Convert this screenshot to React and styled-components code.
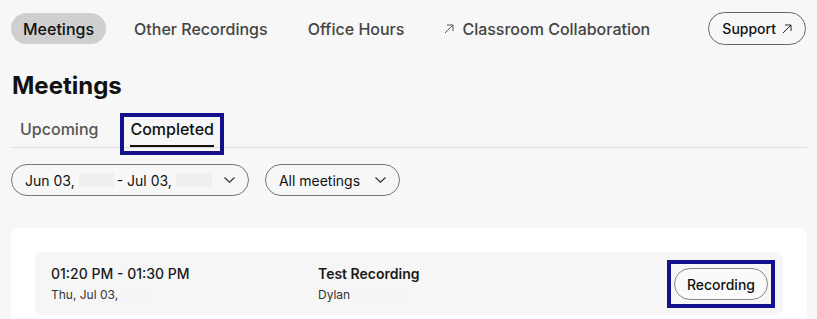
import { createGlobalStyle, styled } from 'styled-components'

const GlobalStyle = createGlobalStyle`
  html, body {
    margin: 0;
    padding: 0;
    background: #f7f7f7;
    font-family: Inter, "Noto Sans", "Liberation Sans", sans-serif;
    color: #111;
    overflow: hidden;
  }
`

const Arrow = ({ size = 9, color = '#555' }) => (
  <svg width={size} height={size} viewBox="0 0 10 10" fill="none">
    <path d="M1 9 L9 1 M3 1 H9 V7" stroke={color} strokeWidth="1" />
  </svg>
)

const Chevron = () => (
  <svg width="11" height="6" viewBox="0 0 11 6" fill="none">
    <path d="M0.5 0.5 L5.5 5.2 L10.5 0.5" stroke="#333" strokeWidth="1.2" />
  </svg>
)

const App = () => {
  return (
    <Page>
      <GlobalStyle />
      <Nav>
        <NavLinks>
          <NavLink $active>Meetings</NavLink>
          <NavLink>Other Recordings</NavLink>
          <NavLink>Office Hours</NavLink>
          <NavLink>
            <Arrow size={10} />
            Classroom Collaboration
          </NavLink>
        </NavLinks>
        <SupportButton>
          Support
          <Arrow size={10} color="#222" />
        </SupportButton>
      </Nav>

      <Title>Meetings</Title>

      <Tabs>
        <Tab>Upcoming</Tab>
        <Highlight $px={6} $py={4} $ml={-10} $mt={-8} $mb={-8}>
          <Tab $active>Completed</Tab>
        </Highlight>
      </Tabs>

      <Filters>
        <Dropdown>
          Jun 03,
          <Redacted $w={35} />
          - Jul 03,
          <Redacted $w={36} />
          <ChevronWrap $gap={9}>
            <Chevron />
          </ChevronWrap>
        </Dropdown>
        <Dropdown>
          All meetings
          <ChevronWrap $gap={15}>
            <Chevron />
          </ChevronWrap>
        </Dropdown>
      </Filters>

      <Card>
        <MeetingRow>
          <Cell>
            <Primary>01:20 PM - 01:30 PM</Primary>
            <Secondary>
              Thu, Jul 03,
              <Redacted $w={30} $soft />
            </Secondary>
          </Cell>
          <Cell>
            <Primary $strong>Test Recording</Primary>
            <Secondary>
              Dylan
              <Redacted $w={48} $soft />
            </Secondary>
          </Cell>
          <Highlight $px={3} $py={4} $ml={0} $mt={-8} $mb={-8} $mr={-8}>
            <RecordingButton>Recording</RecordingButton>
          </Highlight>
        </MeetingRow>
      </Card>
    </Page>
  )
}

const Page = styled.div`
  padding: 12px 10px 0 11px;
  height: 319px;
  box-sizing: border-box;
  overflow: hidden;
`

const Nav = styled.nav`
  display: flex;
  align-items: center;
  justify-content: space-between;
`

const NavLinks = styled.div`
  display: flex;
  align-items: center;
  gap: 16px;
`

const NavLink = styled.a`
  display: flex;
  align-items: center;
  gap: 8px;
  height: 31px;
  padding: 0 12px;
  border-radius: 999px;
  font-size: 16px;
  font-weight: 500;
  color: ${(p) => (p.$active ? '#111' : '#444')};
  background: ${(p) => (p.$active ? '#cfcfcf' : 'transparent')};
  cursor: pointer;
`

const SupportButton = styled.button`
  display: flex;
  align-items: center;
  gap: 6px;
  height: 33px;
  padding: 0 13px;
  margin-right: 1px;
  border: 1px solid #666;
  border-radius: 999px;
  background: transparent;
  font-family: inherit;
  font-size: 14px;
  font-weight: 500;
  color: #111;
`

const Title = styled.h1`
  margin: 26px 0 0 1px;
  font-size: 24px;
  line-height: 29px;
  font-weight: 700;
  color: #111;
`

const Tabs = styled.div`
  display: flex;
  align-items: flex-end;
  gap: 32px;
  margin-top: 21px;
  padding-left: 9px;
  border-bottom: 1px solid #dcdcdc;
`

const Highlight = styled.div`
  display: flex;
  align-items: center;
  padding: ${(p) => p.$py}px ${(p) => p.$px}px;
  margin: ${(p) => p.$mt}px ${(p) => p.$mr || 0}px ${(p) => p.$mb}px ${(p) => p.$ml}px;
  border: 4px solid #15118c;
  position: relative;
  z-index: 1;
`

const Tab = styled.div`
  padding-bottom: 8px;
  font-size: 16px;
  line-height: 16px;
  font-weight: 500;
  color: ${(p) => (p.$active ? '#111' : '#555')};
  border-bottom: 2px solid ${(p) => (p.$active ? '#111' : 'transparent')};
`

const Filters = styled.div`
  display: flex;
  gap: 16px;
  margin-top: 16px;
`

const Dropdown = styled.button`
  display: flex;
  align-items: center;
  height: 32px;
  padding: 0 13px 0 13px;
  border: 1px solid #777;
  border-radius: 999px;
  background: transparent;
  font-family: inherit;
  font-size: 14px;
  color: #111;
  white-space: pre;
`

const ChevronWrap = styled.span`
  display: flex;
  margin-left: ${(p) => p.$gap || 10}px;
`

const Redacted = styled.span`
  display: inline-block;
  width: ${(p) => p.$w}px;
  height: 14px;
  margin: 0 3px 0 4px;
  background: ${(p) => (p.$soft ? '#f4f4f4' : '#efefef')};
`

const Card = styled.div`
  margin-top: 32px;
  padding: 24px 24px 0;
  background: #fff;
  border-radius: 8px 8px 0 0;
  height: 120px;
`

const MeetingRow = styled.div`
  display: grid;
  grid-template-columns: 267px 1fr auto;
  align-items: center;
  padding: 13px 16px 12px;
  background: #f6f6f6;
  border-radius: 8px;
`

const Cell = styled.div`
  display: flex;
  flex-direction: column;
  gap: 4px;
`

const Primary = styled.div`
  font-size: 14px;
  line-height: 18px;
  font-weight: ${(p) => (p.$strong ? 600 : 500)};
  color: #1a1a1a;
`

const Secondary = styled.div`
  display: flex;
  align-items: center;
  font-size: 12px;
  line-height: 16px;
  color: #333;
`

const RecordingButton = styled.button`
  height: 32px;
  padding: 0 12px;
  border: 1px solid #888;
  border-radius: 999px;
  background: #fafafa;
  font-family: inherit;
  font-size: 14px;
  font-weight: 500;
  color: #111;
`

export default App
